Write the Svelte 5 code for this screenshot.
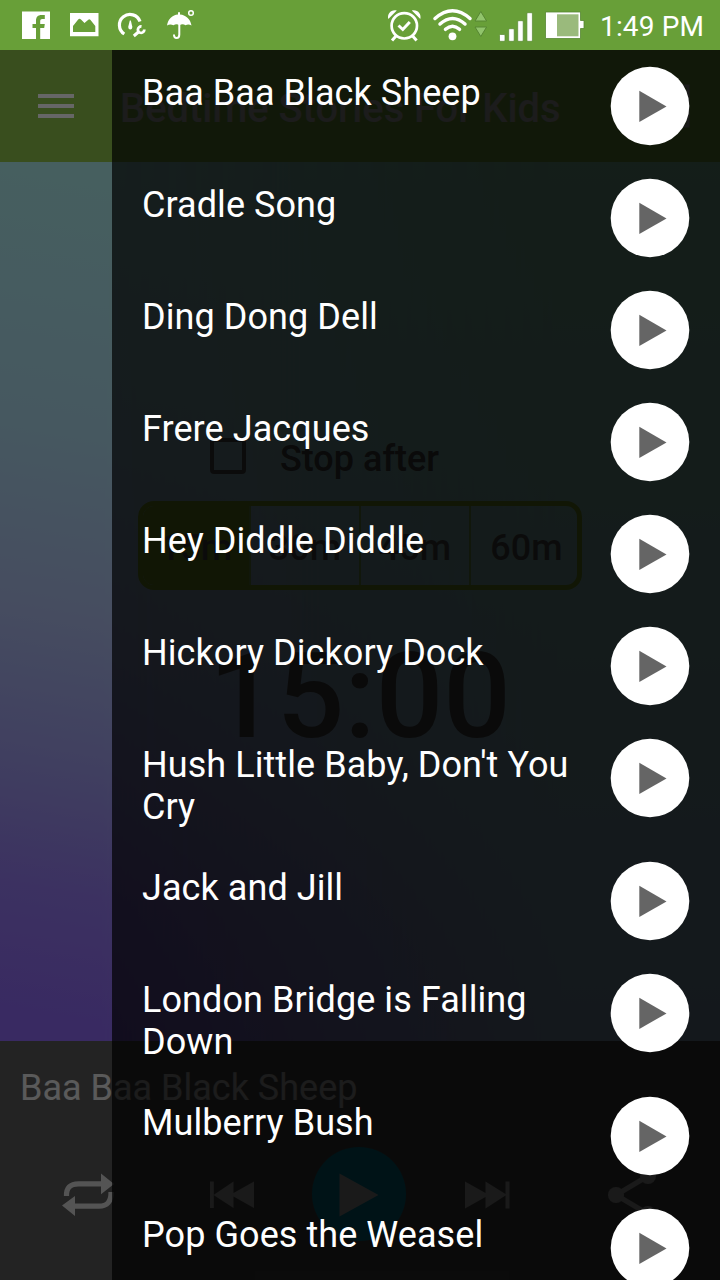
<script>
  const songs = [
    'Baa Baa Black Sheep',
    'Cradle Song',
    'Ding Dong Dell',
    'Frere Jacques',
    'Hey Diddle Diddle',
    'Hickory Dickory Dock',
    "Hush Little Baby, Don't You Cry",
    'Jack and Jill',
    'London Bridge is Falling Down',
    'Mulberry Bush',
    'Pop Goes the Weasel'
  ];
  const times = ['15m', '30m', '45m', '60m'];
</script>

<div class="screen">
  <header class="status">
    <div class="group">
      <svg width="48" height="50" viewBox="12 0 48 50">
        <path fill="#fff" d="M22 11.500h28V39h-9.800V28h4l.6-4h-4.600v-3c0-1.300.6-2 2-2h2.600v-4h-3.300c-3.700 0-5.500 2-5.500 6v3h-3.500v4H36v11H22z" />
      </svg>
      <svg width="48" height="50" viewBox="60 0 48 50">
        <path fill="#fff" fill-rule="evenodd" d="M70 13h28.500v23.300H70zM73 32h22.300v-6l-5-6.200q-1-1-2 0L84.500 23l-3.500-3.600q-1.500-1.200-2.800 0L73 26z" />
      </svg>
      <svg width="48" height="50" viewBox="108 0 48 50">
        <path fill="none" stroke="#fff" stroke-width="3.200" d="M124.300 34A10.600 10.600 0 1 1 140 21.500" />
        <path fill="#fff" d="M129.800 20.500h1l1.600 6.500q-.2 2.500-2.100 2.500t-2.100-2.500z" />
        <path fill="none" stroke="#fff" stroke-width="3" d="M133.800 36l5.200-4.500" />
        <path fill="none" stroke="#fff" stroke-width="2.800" d="M141.500 26.500a3.200 3.200 0 1 0 2.800 3" />
      </svg>
      <svg width="48" height="50" viewBox="156 0 48 50">
        <path fill="#fff" d="M167 25.500c1-6.500 5.500-10.500 11-11v-2.300h2v2.300c5.500.5 10.500 4.500 11.500 11q-3-2-6-.3-3-1.700-6 0-3-1.700-6 0-3.500-1.700-6.500.3z" />
        <path fill="none" stroke="#fff" stroke-width="2" d="M179.300 24v10.500q0 3.500-2.700 3.500t-2.600-3.500" />
        <circle cx="191" cy="13" r="2.300" fill="none" stroke="#fff" stroke-width="1.500" />
      </svg>
    </div>
    <div class="group right">
      <svg width="48" height="50" viewBox="380 0 48 50">
        <g fill="none" stroke="#fff">
          <circle cx="404.300" cy="25.800" r="12.700" stroke-width="2.700" />
          <path stroke-width="3" d="M398.500 25.500l4.300 4 7-7.500M396 36l-4 4.500M412.600 36l4 4.500" />
        </g>
        <path fill="#fff" d="M388.300 19c-1.500-5 3-10 8.500-8.500zM420.300 19c1.500-5-3-10-8.500-8.500z" />
      </svg>
      <svg width="64" height="50" viewBox="428 0 64 50">
        <circle cx="452.500" cy="36.300" r="3.900" fill="#fff" />
        <g fill="none" stroke="#fff" stroke-width="3.500" stroke-linecap="round">
          <path d="M435 18.500q17.500-15.500 35 0M440 24q12.500-11 25 0M445.500 29.300q7-6.200 14 0" />
        </g>
        <path fill="#91c46c" stroke="#568632" stroke-width="1" d="M475 21l5.800-9.500 5.800 9.500zM475 27h11.600l-5.800 9.500z" />
      </svg>
      <svg width="48" height="50" viewBox="492 0 48 50">
        <g fill="#fff" stroke="#568632" stroke-width=".7">
          <rect x="499.500" y="34.500" width="5.500" height="6.800" rx="1" />
          <rect x="508.700" y="28.700" width="5.500" height="12.600" rx="1" />
          <rect x="517.700" y="20.700" width="5.500" height="20.600" rx="1" />
          <rect x="526.900" y="12.700" width="5.500" height="28.600" rx="1" />
        </g>
      </svg>
      <svg width="60" height="50" viewBox="540 0 60 50">
        <path fill="#fff" stroke="#568632" stroke-width=".8" d="M545.500 12h35v8.500h3.500v8h-3.500V38.500h-35z" />
        <path fill="#9aba7c" d="M557 14.300h21.500v22H557z" />
      </svg>
      <span class="clock">1:49 PM</span>
    </div>
  </header>

  <main class="app">
    <div class="toolbar">
      <svg width="36" height="24" viewBox="0 0 36 24"><path fill="#fff" d="M0 0h36v4H0zM0 10h36v4H0zM0 20h36v4H0z" /></svg>
      <h1>Bedtime Stories For Kids</h1>
      <svg class="list-icon" width="38" height="44" viewBox="0 0 38 44"><path fill="none" stroke="#ddd" stroke-width="3" d="M2 2h34v40H2z" /></svg>
    </div>

    <section class="stage">
      <div class="glow"></div>
      <div class="stop">
        <span class="box"></span>
        <span class="label">Stop after</span>
      </div>
      <div class="segments">
        {#each times as t, i}
          <span class:active={i === 0}>{t}</span>
        {/each}
      </div>
      <div class="timer">15:00</div>
    </section>

    <footer class="player">
      <div class="now">Baa Baa Black Sheep</div>
      <svg width="720" height="110" viewBox="0 1141 720 110">
        <g fill="none" stroke="#d2d2d2" stroke-width="5.200">
          <path d="M66.500 1196q-.5-12.200 12-12.200H102M111 1192q.5 14.200-12 14.200H74" />
        </g>
        <g fill="#d2d2d2">
          <path d="M101 1173.500l13 10.400-13 10.400zM75 1216l-13-10.400 13-9.600z" />
          <path d="M210 1181.500h3.800v26.500H210zM213.500 1195l20-13.500v11.500l20.500-11.500v26.500l-20.500-11.500v11.500z" />
          <path d="M465 1181.500l20.500 11.500v-11.500l20 12.500v-12.500h4v27h-4v-13l-20 13v-11.500l-20.500 11.500z" />
        </g>
        <circle cx="359" cy="1194" r="47" fill="#009cbc" />
        <path fill="#d2d2d2" d="M339.500 1173.500l39 21.500-39 21.500z" />
        <path fill="none" stroke="#d2d2d2" stroke-width="5" d="M648 1176l-32 19 32 19" />
        <g fill="#d2d2d2"><circle cx="616" cy="1195" r="8" /><circle cx="648" cy="1176" r="8" /><circle cx="648" cy="1214" r="8" /></g>
      </svg>
    </footer>

    <div class="scrim"></div>
    <nav class="drawer">
      {#each songs as song}
        <div class="item">
          <span class="name">{song}</span>
          <svg width="80" height="80" viewBox="0 0 80 80">
            <circle cx="40" cy="40" r="39.300" fill="#fff" />
            <path fill="#656565" d="M29.300 24.700l27.200 15.700-27.200 15.700z" />
          </svg>
        </div>
      {/each}
    </nav>
  </main>
</div>

<style>
  :global(body) { margin: 0; overflow: hidden; }
  .screen {
    width: 720px; height: 1280px; overflow: hidden;
    display: flex; flex-direction: column;
    font-family: Roboto, sans-serif; background: #000;
  }
  svg { display: block; flex: none; }
  .status {
    height: 50px; flex: none; background: #689f38; box-sizing: border-box;
    padding: 0 0 0 12px; display: flex; justify-content: space-between;
  }
  .group { display: flex; }
  .right { width: 340px; }
  .clock { color: #fff; font-size: 28px; line-height: 53px; letter-spacing: 0.15px; white-space: nowrap; }
  .app { position: relative; flex: 1; display: flex; flex-direction: column; overflow: hidden; }
  .toolbar {
    height: 112px; flex: none; background: #8ec34b; color: #e0e0e0;
    display: flex; align-items: center; padding: 0 30px 0 38px; box-sizing: border-box;
  }
  h1 { margin: 6px 0 0 46px; font-size: 40px; font-weight: 500; line-height: 48px; letter-spacing: -0.06px; white-space: nowrap; }
  .list-icon { margin-left: auto; }
  .stage {
    position: relative; isolation: isolate;
    height: 879px; flex: none; box-sizing: border-box; padding-top: 272px;
    display: flex; flex-direction: column; align-items: center;
    background: linear-gradient(#a1efca 0%, #a3dcdc 50%, #a5c4e4 100%);
    font-weight: 500;
  }
  .glow {
    position: absolute; inset: 0; z-index: -1;
    background: linear-gradient(190deg, #afeeee 12%, #afdcf0 38%, #afc0f0 56%, #a2a2f0 70%, #967cf2 84%, #8f69f4 97%);
    mask-image: linear-gradient(90deg, #000 14%, transparent 78%);
  }
  .stop { height: 46px; width: 300px; display: flex; align-items: center; gap: 34px; font-size: 36px; color: #505050; }
  .box { width: 36px; height: 36px; border: 4px solid #606060; border-radius: 4px; box-sizing: border-box; margin-bottom: 2px; }
  .label { padding-top: 4px; }
  .segments {
    margin-top: 21px; width: 444px; height: 89px; box-sizing: border-box;
    border: 5px solid #8ab42c; border-radius: 16px; display: grid;
    grid-template-columns: 106px 110px 110px 108px; font-size: 36px; color: #606060; overflow: hidden;
  }
  .segments span { text-align: center; line-height: 84px; box-sizing: border-box; }
  .segments span + span { border-left: 2px solid #8cb860; }
  .segments .active { background: #8ab42c; }
  .segments span:last-child { padding-left: 5px; }
  .timer { margin-top: 37px; font-size: 119px; line-height: 140px; color: #555; }
  .player { flex: 1; background: #585858; color: #e0e0e0; }
  .now { height: 100px; box-sizing: border-box; padding: 26px 20px 0; font-size: 36px; line-height: 42px; }
  .scrim { position: absolute; inset: 0; background: rgba(0, 0, 0, 0.6); }
  .drawer { position: absolute; top: 0; right: 0; bottom: 0; width: 608px; background: rgba(0, 0, 0, 0.69); overflow: hidden; }
  .item { display: flex; justify-content: space-between; align-items: flex-start; padding: 0 30px; min-height: 112px; box-sizing: border-box; }
  .item svg { margin-top: 16px; }
  .name { width: 452px; padding: 22px 0 17px; color: #fff; font-size: 36px; line-height: 42px; letter-spacing: 0.07px; }
</style>
